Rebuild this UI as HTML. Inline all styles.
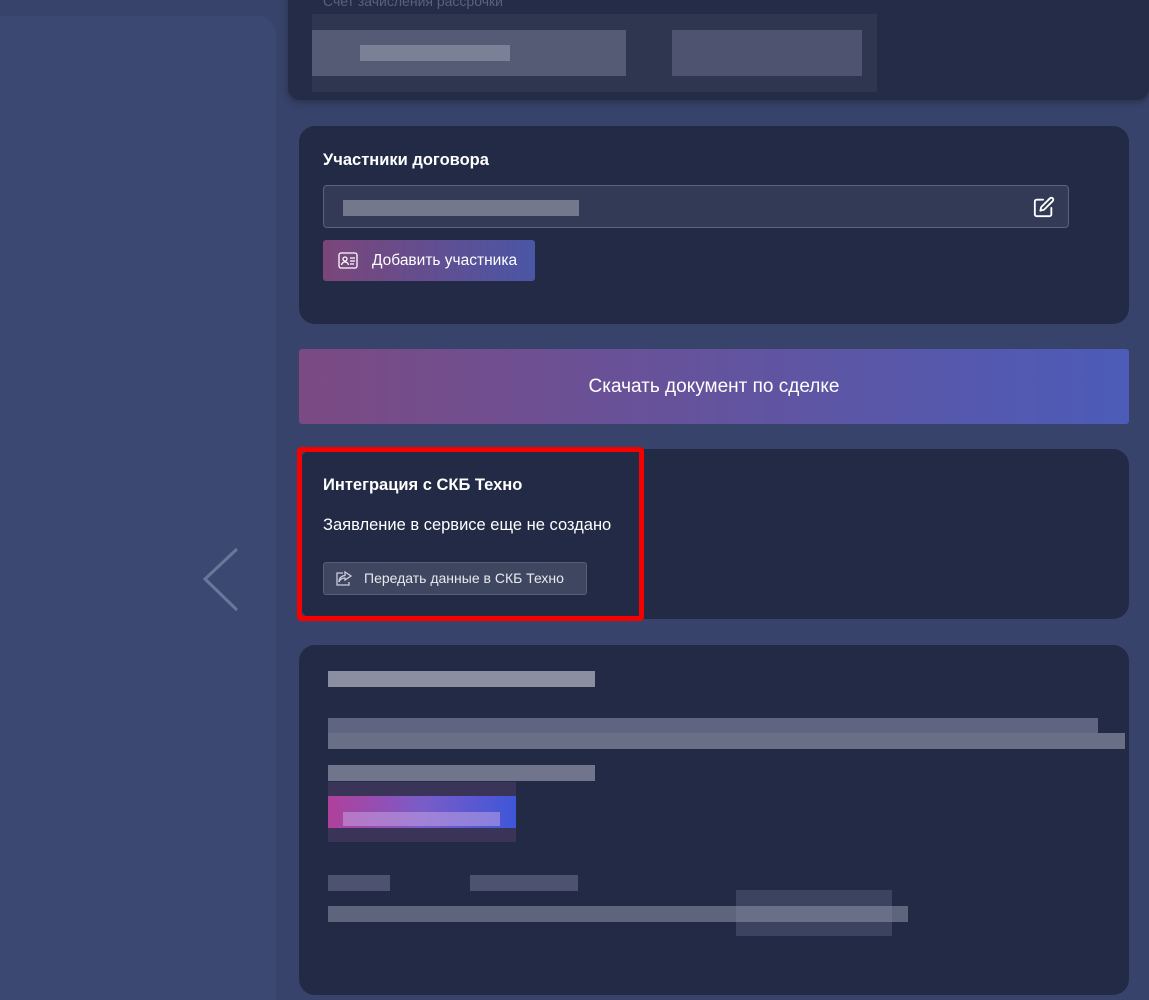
<!DOCTYPE html>
<html><head><meta charset="utf-8"><style>
*{box-sizing:border-box;margin:0;padding:0}
body{width:1149px;height:1000px;overflow:hidden;background:#37436a;font-family:"Liberation Sans",Arial,sans-serif;position:relative;color:#fff}
.abs{position:absolute}
.lp{left:0;top:16px;width:276px;height:984px;background:#3b4872;border-top-right-radius:18px}
.card{background:#222a45;border-radius:16px}
.g{position:absolute;background:#6c7287}
</style></head><body>
<div class="abs lp"></div>
<svg class="abs" style="left:200px;top:546px" width="42" height="68"><path d="M37 3 L5 33 L37 64" stroke="#6a7799" stroke-width="3" fill="none"/></svg>

<div class="abs" style="left:288px;top:-10px;width:861px;height:110px;background:#252c47;border-radius:12px;box-shadow:0 2px 8px rgba(0,0,0,.3)"></div>
<div class="abs" style="left:323px;top:-7px;font-size:14px;color:#5a6180">Счет зачисления рассрочки</div>
<div class="abs" style="left:312px;top:14px;width:565px;height:78px;background:#2f3650"></div>
<div class="g" style="left:312px;top:30px;width:314px;height:46px;background:#555b74"></div>
<div class="g" style="left:360px;top:45px;width:150px;height:16px;background:#7a8096"></div>
<div class="g" style="left:672px;top:30px;width:190px;height:46px;background:#4e5470"></div>

<div class="abs card" style="left:299px;top:126px;width:830px;height:198px"></div>
<div class="abs" style="left:323px;top:151px;font-size:16.5px;font-weight:bold">Участники договора</div>
<div class="abs" style="left:323px;top:185px;width:746px;height:43px;background:#333a55;border:1px solid #5a6283;border-radius:4px"></div>
<div class="g" style="left:343px;top:200px;width:236px;height:16px;background:#73788c"></div>
<svg class="abs" style="left:1033px;top:196px" width="22" height="22" viewBox="0 0 24 24" fill="none" stroke="#fff" stroke-width="2" stroke-linecap="round" stroke-linejoin="round"><path d="M11 4H4a2 2 0 0 0-2 2v14a2 2 0 0 0 2 2h14a2 2 0 0 0 2-2v-7"/><path d="M18.5 2.5a2.1 2.1 0 0 1 3 3L12 15l-4 1 1-4 9.5-9.5z"/></svg>
<div class="abs" style="left:323px;top:240px;width:212px;height:41px;border-radius:3px;background:linear-gradient(90deg,#7b4679,#4a56a6)"></div>
<svg class="abs" style="left:338px;top:252px" width="20" height="17" viewBox="0 0 20 17" fill="none" stroke="#fff" stroke-width="1.3"><rect x="1" y="1" width="18" height="15" rx="2"/><circle cx="7" cy="7" r="2"/><path d="M3.5 13c.5-2 2-3 3.5-3s3 1 3.5 3M12 6h5M12 9h5M12 12h4"/></svg>
<div class="abs" style="left:372px;top:252px;font-size:15.5px">Добавить участника</div>

<div class="abs" style="left:299px;top:349px;width:830px;height:75px;border-radius:3px;background:linear-gradient(90deg,#7b4a83,#4c5cb8);display:flex;align-items:center;justify-content:center;font-size:19px">Скачать документ по сделке</div>

<div class="abs card" style="left:299px;top:449px;width:830px;height:170px"></div>
<div class="abs" style="left:297px;top:447px;width:347px;height:174px;border:5px solid #f60000;border-radius:4px"></div>
<div class="abs" style="left:323px;top:476px;font-size:16.5px;font-weight:bold">Интеграция с СКБ Техно</div>
<div class="abs" style="left:323px;top:516px;font-size:16.5px">Заявление в сервисе еще не создано</div>
<div class="abs" style="left:323px;top:562px;width:264px;height:33px;background:#3f465f;border:1px solid #575e78;border-radius:3px"></div>
<svg class="abs" style="left:335px;top:570px" width="18" height="17" viewBox="0 0 18 17" fill="none" stroke="#ccd" stroke-width="1.3"><path d="M10 2l6 4-6 4V8c-3 0-5 1-6 4 0-4 2-6 6-6.5z"/><path d="M8 3H2v12h12v-3"/></svg>
<div class="abs" style="left:364px;top:570px;font-size:14px;color:#e8e9ef">Передать данные в СКБ Техно</div>

<div class="abs card" style="left:299px;top:645px;width:830px;height:350px"></div>
<div class="g" style="left:328px;top:671px;width:267px;height:16px;background:#8a8ea0"></div>
<div class="g" style="left:328px;top:718px;width:770px;height:16px;background:#5f6580"></div>
<div class="g" style="left:328px;top:733px;width:797px;height:16px;background:#6a6f88"></div>
<div class="g" style="left:328px;top:765px;width:267px;height:16px;background:#70758b"></div>
<div class="abs" style="left:328px;top:782px;width:188px;height:60px;background:#3a3558"></div>
<div class="abs" style="left:328px;top:796px;width:188px;height:32px;background:linear-gradient(90deg,#b0409a,#7a5cc8,#3f56d8)"></div>
<div class="g" style="left:343px;top:812px;width:157px;height:14px;background:rgba(200,170,230,.5)"></div>
<div class="g" style="left:328px;top:875px;width:62px;height:16px;background:#4c5270"></div>
<div class="g" style="left:470px;top:875px;width:108px;height:16px;background:#4c5270"></div>
<div class="g" style="left:328px;top:906px;width:580px;height:16px;background:#5e647c"></div>
<div class="g" style="left:736px;top:890px;width:156px;height:46px;background:#3c4360"></div>
<div class="g" style="left:736px;top:906px;width:156px;height:16px;background:#6a6f88"></div>
</body></html>
